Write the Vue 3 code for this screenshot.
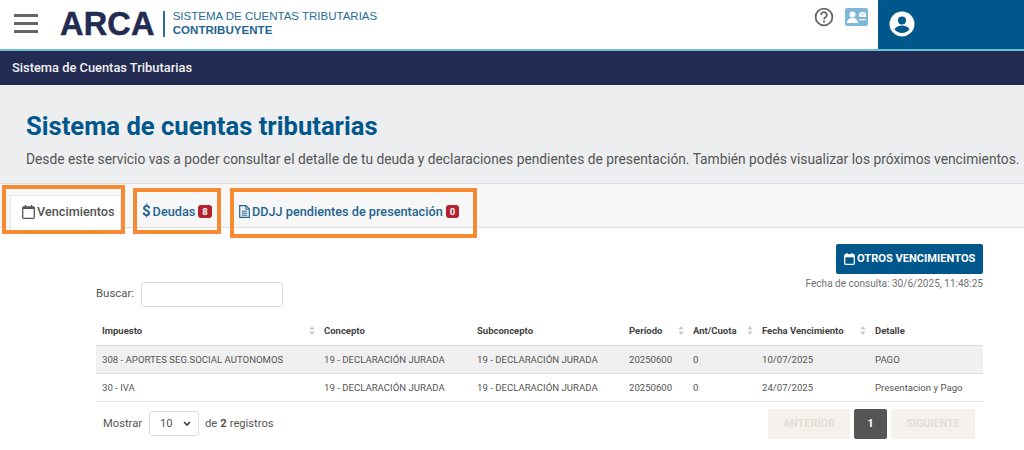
<script setup>
const cols = [
  { name: 'Impuesto', w: 222 },
  { name: 'Concepto', w: 153 },
  { name: 'Subconcepto', w: 152 },
  { name: 'Período', w: 64 },
  { name: 'Ant/Cuota', w: 69 },
  { name: 'Fecha Vencimiento', w: 113 },
  { name: 'Detalle', w: 114 }
]
const rows = [
  ['308 - APORTES SEG.SOCIAL AUTONOMOS', '19 - DECLARACIÓN JURADA', '19 - DECLARACIÓN JURADA', '20250600', '0', '10/07/2025', 'PAGO'],
  ['30 - IVA', '19 - DECLARACIÓN JURADA', '19 - DECLARACIÓN JURADA', '20250600', '0', '24/07/2025', 'Presentacion y Pago']
]
</script>

<template>
  <div class="page">
    <header class="top">
      <div class="burger"><i></i><i></i><i></i></div>
      <div class="logo">ARCA</div>
      <div class="divider"></div>
      <div class="sys">
        <div class="sys1">SISTEMA DE CUENTAS TRIBUTARIAS</div>
        <div class="sys2">CONTRIBUYENTE</div>
      </div>
      <div class="spacer"></div>
      <svg class="help" width="20" height="20" viewBox="0 0 20 20">
        <circle cx="10" cy="10" r="8.4" fill="none" stroke="#666" stroke-width="1.8" />
        <path d="M7.2 8a2.8 2.8 0 1 1 4.3 2.3c-1 .6-1.5 1.1-1.5 2.1" fill="none" stroke="#666" stroke-width="1.8" />
        <circle cx="10" cy="14.6" r="1.1" fill="#666" />
      </svg>
      <svg class="card" width="23" height="18" viewBox="0 0 23 18">
        <rect width="23" height="18" rx="2" fill="#7db8d8" />
        <circle cx="7.5" cy="6.5" r="3" fill="#fff" />
        <path d="M2 15c0-3.5 2.5-5 5.5-5s5.5 1.500 5.500 5z" fill="#fff" />
        <rect x="14" y="4" width="7" height="5" fill="#fff" />
        <path d="M14 4l3.500 3L21 4" fill="none" stroke="#7db8d8" stroke-width=".8" />
        <rect x="14" y="11" width="7" height="1.200" fill="#fff" />
      </svg>
      <div class="user">
        <svg width="26" height="26" viewBox="0 0 26 26">
          <circle cx="13" cy="13" r="12.500" fill="#fff" />
          <circle cx="13" cy="9.500" r="4" fill="#00578c" />
          <path d="M5.500 18.500c1.500-3 4.500-4 7.500-4s6 1 7.500 4c-2 2.300-4.600 3.500-7.500 3.500s-5.500-1.200-7.500-3.500z" fill="#00578c" />
        </svg>
      </div>
    </header>

    <nav class="bar">Sistema de Cuentas Tributarias</nav>

    <section class="hero">
      <h1>Sistema de cuentas tributarias</h1>
      <p>Desde este servicio vas a poder consultar el detalle de tu deuda y declaraciones pendientes de presentación. También podés visualizar los próximos vencimientos.</p>
    </section>

    <div class="tabs">
      <div class="mark mark1">
        <div class="tab active">
          <svg class="ico" width="13" height="14" viewBox="0 0 13 14">
            <path d="M3.500 0v3M9.500 0v3" stroke="currentColor" stroke-width="1.400" />
            <rect x=".7" y="2" width="11.600" height="11.300" rx="1" fill="none" stroke="currentColor" stroke-width="1.300" />
            <rect x=".7" y="2" width="11.600" height="2" fill="currentColor" />
          </svg>
          Vencimientos
        </div>
      </div>
      <div class="mark mark2">
        <div class="tab"><b class="dollar">$</b> Deudas <span class="badge">8</span></div>
      </div>
      <div class="mark mark3">
        <div class="tab">
          <svg class="ico" width="11" height="13" viewBox="0 0 11 13">
            <path d="M.7.700h6.300l3.300 3.300v8.300H.7z" fill="none" stroke="currentColor" stroke-width="1.200" />
            <path d="M2.800 6.200h5.400M2.800 8.200h5.400M2.800 10.200h5.400M6.800 1v3.200h3.200" fill="none" stroke="currentColor" stroke-width="1" />
          </svg>
          DDJJ pendientes de presentación <span class="badge">0</span>
        </div>
      </div>
    </div>

    <main class="content">
      <div class="actions">
        <button class="other">
          <svg width="11" height="12" viewBox="0 0 11 12">
            <path d="M3 0v2M8 0v2" stroke="#fff" stroke-width="1.300" />
            <rect x=".7" y="1.700" width="9.600" height="9.600" rx="1" fill="none" stroke="#fff" stroke-width="1.300" />
            <rect x=".7" y="1.700" width="9.600" height="2.600" fill="#fff" />
          </svg>
          OTROS VENCIMIENTOS
        </button>
        <div class="when">Fecha de consulta: 30/6/2025, 11:48:25</div>
      </div>

      <div class="search">
        <label>Buscar:</label>
        <input type="text" />
      </div>

      <table>
        <colgroup>
          <col v-for="c in cols" :key="c.name" :style="{ width: c.w + 'px' }" />
        </colgroup>
        <thead>
          <tr>
            <th v-for="(c, i) in cols" :key="c.name">
              {{ c.name }}
              <svg v-if="i !== 1 && i !== 2 && i !== 6" class="sort" width="6" height="9" viewBox="0 0 6 9">
                <path d="M3 0l2.500 3.500h-5zM3 9L.5 5.500h5z" fill="#c9c9c9" />
              </svg>
            </th>
          </tr>
        </thead>
        <tbody>
          <tr v-for="(r, i) in rows" :key="i">
            <td v-for="(v, j) in r" :key="j">{{ v }}</td>
          </tr>
        </tbody>
      </table>

      <div class="foot">
        <div class="show">
          Mostrar
          <span class="sel">10
            <svg width="8" height="5" viewBox="0 0 8 5"><path d="M1 1l3 3 3-3" fill="none" stroke="#333" stroke-width="1.500" /></svg>
          </span>
          de <b>2</b> registros
        </div>
        <div class="pager">
          <span class="pg off prev">ANTERIOR</span>
          <span class="pg cur">1</span>
          <span class="pg off next">SIGUIENTE</span>
        </div>
      </div>
    </main>
  </div>
</template>

<style>
html, body { margin: 0; background: #fff; overflow: hidden; }
</style>

<style scoped>
.page {
  width: 1024px;
  height: 450px;
  overflow: hidden;
  font-family: Roboto, "Liberation Sans", sans-serif;
  color: #555;
  background: #fff;
}
.top {
  height: 49px;
  border-bottom: 2px solid #6cc0d8;
  display: flex;
  align-items: center;
  box-sizing: content-box;
}
.burger { margin: 0 0 2px 14px; width: 24px; display: flex; flex-direction: column; gap: 5px; }
.burger i { display: block; height: 3px; background: #666; }
.logo {
  margin: 0 0 2px 22px;
  font-family: "Liberation Sans", sans-serif;
  font-weight: 700;
  font-size: 32.500px;
  line-height: 30px;
  letter-spacing: .2px;
  color: #232b52;
  -webkit-text-stroke: .5px #232b52;
}
.divider { width: 2px; height: 26px; margin: 0 8px 2px 8px; background: #2c6e96; }
.sys { font-family: "Liberation Sans", sans-serif; color: #2a6d94; margin-bottom: 2px; }
.sys1 { font-size: 11.500px; line-height: 14px; }
.sys2 { font-size: 11.500px; line-height: 15px; font-weight: 700; letter-spacing: .05px; color: #1f6490; }
.spacer { flex: 1; }
.help { margin: 0 11px 16px 0; }
.card { margin: 0 10px 16px 0; }
.user {
  width: 146px;
  height: 51px;
  margin-bottom: -2px;
  background: #00578c;
  border-bottom: 2px solid #6cc0d8;
  box-sizing: border-box;
  display: flex;
  align-items: center;
  padding-left: 11px;
}
.user svg { margin-top: -1px; }
.bar {
  height: 34px;
  background: #232b52;
  color: #f2f2f2;
  font-size: 12.870px;
  font-weight: 500;
  line-height: 33px;
  padding-left: 12px;
}
.hero {
  height: 99px;
  background: #eceef0;
  border-bottom: 1px solid #dedede;
  padding: 26px 0 0 26px;
  box-sizing: border-box;
  white-space: nowrap;
}
.hero h1 {
  margin: 0;
  font-size: 25.600px;
  line-height: 30px;
  font-weight: 700;
  color: #00578c;
}
.hero p {
  margin: 9px 0 0;
  font-size: 13.790px;
  line-height: 18px;
  color: #555;
}
.tabs {
  height: 43px;
  background: #f7f7f7;
  border-bottom: 1px solid #dedede;
  position: relative;
  font-size: 12.700px;
  font-weight: 500;
  color: #1f6490;
  box-sizing: content-box;
}
.mark { position: absolute; border: 4px solid #f58a33; box-sizing: border-box; }
.mark1 { left: 2px; top: 1px; width: 123px; height: 49px; }
.mark2 { left: 133px; top: 4px; width: 88px; height: 46px; }
.mark3 { left: 230px; top: 4px; width: 247px; height: 50px; }
.tab { display: flex; align-items: center; gap: 2px; white-space: nowrap; height: 100%; box-sizing: border-box; }
.mark1 .tab {
  margin: 6px 0 0 4px;
  height: 35px;
  padding: 0 0 3px 11px;
  background: #fff;
  color: #555;
  border: 1px solid #e8e8e8;
  border-bottom: 0;
}
.mark2 .tab { padding-left: 5px; }
.mark3 .tab { padding: 0 0 4px 5px; }
.ico { flex: none; }
.mark1 .ico { margin-right: 0; }
.dollar { font-size: 15px; font-weight: 700; }
.badge {
  display: inline-block;
  min-width: 5px;
  padding: 0 4px;
  height: 13px;
  line-height: 13px;
  border-radius: 3px;
  background: #b5222d;
  color: #fff;
  font-size: 9.500px;
  font-weight: 700;
  text-align: center;
  margin-left: 1px;
}
.content { padding: 16px 41px 0 96px; position: relative; }
.actions { display: flex; flex-direction: column; align-items: flex-end; }
.other {
  width: 147px;
  height: 30px;
  padding: 0 0 0 8px;
  border: 0;
  border-radius: 2px;
  background: #00578c;
  color: #fff;
  font: 700 11.100px/30px Roboto, sans-serif;
  display: flex;
  align-items: center;
  gap: 2px;
}
.when { margin-top: 3px; font-size: 10.050px; line-height: 13px; color: #707070; }
.search { margin-top: -11px; height: 28px; display: flex; align-items: center; font-size: 11.400px; color: #555; }
.search input {
  width: 142px;
  height: 25px;
  margin: 2px 0 0 7px;
  box-sizing: border-box;
  border: 1px solid #dcdcdc;
  border-radius: 3px;
  background: #fff;
}
table {
  width: 887px;
  table-layout: fixed;
  border-collapse: collapse;
  margin-top: 12px;
}
th {
  position: relative;
  height: 26px;
  padding: 0 6px 3px;
  box-sizing: border-box;
  text-align: left;
  font-size: 9.500px;
  font-weight: 700;
  color: #444;
  border-bottom: 1px solid #d9d9d9;
  white-space: nowrap;
}
.sort { position: absolute; right: 3px; top: 7px; }
td {
  height: 27px;
  padding: 0 6px;
  font-size: 9.600px;
  color: #555;
  border-bottom: 1px solid #e2e2e2;
  white-space: nowrap;
}
tbody tr:first-child { background: #f0f0f0; }
.foot { display: flex; justify-content: space-between; padding: 7px 8px 0 7px; }
.show { display: flex; align-items: center; gap: 6px; font-size: 11.200px; color: #555; height: 30px; margin-top: 0; }
.show b { font-weight: 700; margin: 0 -3px; }
.sel {
  width: 50px;
  height: 25px;
  box-sizing: border-box;
  border: 1px solid #dcdcdc;
  border-radius: 3px;
  display: flex;
  align-items: center;
  justify-content: space-between;
  padding: 0 7px 0 10px;
  margin-left: 1px;
}
.pager { display: flex; gap: 4px; }
.pg {
  height: 30px;
  line-height: 30px;
  text-align: center;
  font-size: 10.800px;
  font-weight: 700;
  border-radius: 2px;
}
.off { background: #f5f2ee; color: #e3ddd6; }
.prev { width: 82px; }
.next { width: 84px; }
.cur { width: 33px; background: #555; color: #fff; }
</style>
